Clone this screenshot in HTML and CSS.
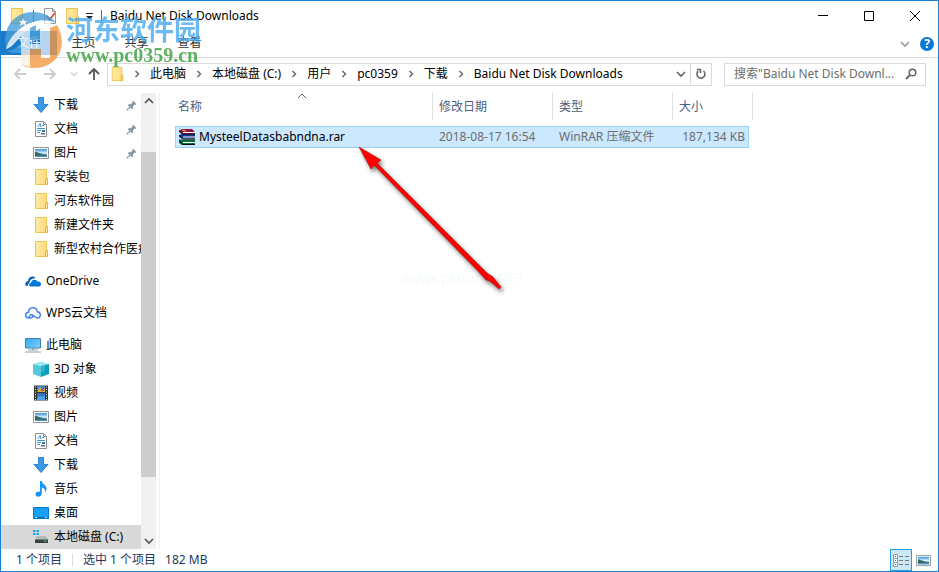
FILE: index.html
```html
<!DOCTYPE html>
<html lang="zh-CN">
<head>
<meta charset="utf-8">
<title>Baidu Net Disk Downloads</title>
<link rel="stylesheet" href="styles.css">
</head>
<body>
<svg class="defs" aria-hidden="true">
  <defs>
    <linearGradient id="gFolder" x1="0" x2="1"><stop offset="0" stop-color="#ffe9a2"/><stop offset="1" stop-color="#ffdc7c"/></linearGradient>
    <linearGradient id="gScreen" x1="0" y1="0" x2="1" y2="1"><stop offset="0" stop-color="#35a9f5"/><stop offset="1" stop-color="#7bd0ff"/></linearGradient>
    <linearGradient id="gSky" x1="0" y1="0" x2="0" y2="1"><stop offset="0" stop-color="#3a8fd9"/><stop offset=".5" stop-color="#d4eefa"/><stop offset="1" stop-color="#2d6f9c"/></linearGradient>
  </defs>
  <symbol id="folder" viewBox="0 0 16 16"><path d="M2.500.5h11v9h1v6h-12z" fill="url(#gFolder)" stroke="#ebc654"/><path d="M14.500 15.500h-2V10l1-1h1v6.500z" fill="#ffe596" stroke="#e3b93e"/></symbol>
  <symbol id="down" viewBox="0 0 16 16"><path d="M5.500.5h5v7h4.500L8 15.500 1 7.500h4.500z" fill="#3a99e8" stroke="#2d83cc"/></symbol>
  <symbol id="doc" viewBox="0 0 16 16"><path d="M2.500.5h8l3 3v12h-11z" fill="#fff" stroke="#8a8f93"/><path d="M10.500.5v3h3" fill="none" stroke="#8a8f93"/><path d="M5 6l2-3.500L8 6M4 7.500h8M4 9.500h4M4 11.500h3M9 4.500h2" fill="none" stroke="#3a97d8"/><path d="M9 9h3v2H9zM8 12h4v1.500H8z" fill="#4c7590"/></symbol>
  <symbol id="pic" viewBox="0 0 16 16"><path d="M.5 2.500h15v11H.5z" fill="#fff" stroke="#8e969c"/><path d="M2 4h12v8H2z" fill="url(#gSky)"/><path d="M2 7c3 0 5 2 12 3v1H2z" fill="#35685e"/><path d="M2 11l6-.5 6 .5v1H2z" fill="#4e91c6"/></symbol>
  <symbol id="cloud" viewBox="0 0 16 16"><path d="M1.500 13C-.5 12 0 8.500 3 8c0-4 5-6 7.500-3L7 6C5 7 4 9 4.500 10.500 3 10.500 2.500 12 3 13z" fill="#0a62b8"/><path d="M5 13.500C3.500 12.500 4 10 6 10c.3-3.500 5-4.500 6.500-1.500 2.500-.3 4 1.500 3.300 3.500-.3 1-1 1.500-2 1.500z" fill="#0078d7"/></symbol>
  <symbol id="wps" viewBox="0 0 16 16"><path d="M4 13C-.5 13 0 7.500 3.500 7.200 3.500 1.500 11.500 1 12.300 6.700c4 .3 4 6.300 0 6.300-3 0-4.500-5-7-3-2 1.500-.5 4 1.500 2.600l1.500-1.300" fill="none" stroke="#4481ed" stroke-width="1.500"/></symbol>
  <symbol id="pc" viewBox="0 0 16 16"><path d="M.5 1.500h15v9.500H.5z" fill="url(#gScreen)" stroke="#467fa5"/><path d="M7 11h2v2H7zM3 12.500h10v1H3z" fill="#91a5b0"/><path d="M0 15h16" stroke="#909da5"/></symbol>
  <symbol id="cube" viewBox="0 0 16 16"><path d="M0 3l8-2.500L16 3 8 5z" fill="#9ee8f1"/><path d="M0 3l8 2v11l-8-3z" fill="#52c9da"/><path d="M8 5l8-2v10l-8 3z" fill="#0b9dbd"/><path d="M8 5l4-1v6l-4 2z" fill="#28b6cd"/></symbol>
  <symbol id="film" viewBox="0 0 16 16"><path d="M1 .5h14v15H1z" fill="#343334"/><path d="M4 1h8v6H4z" fill="#3984d8"/><path d="M4 8h8v7H4z" fill="#316fc1"/><path d="M5 5l2-3 2 2 3-1v4H5z" fill="#d7b52e"/><path d="M8 3h3v3H8z" fill="#a14ac5"/><path d="M4 13l3-3 2 2 3-2v5H4z" fill="#4aa2e6"/><path d="M2.500 1.500v14M13.500 1.500v14" stroke="#eee" stroke-dasharray="1 1.500"/></symbol>
  <symbol id="note" viewBox="0 0 16 16"><path d="M7 0h1.800c.2 3 4.700 4 4.700 7.500 0 1.700-.7 2.800-1.600 4 .6-3.200-.9-4.500-3.100-5v6c0 2-1.700 3.200-3.500 3.200S2.500 14.800 2.500 13.300c0-2 2.500-3.300 4.500-2.600z" fill="#1697f4"/></symbol>
  <symbol id="desk" viewBox="0 0 16 16"><path d="M.5 2.500h15v11H.5z" fill="#17a0fb" stroke="#0879c6"/><path d="M1 12.500h14" stroke="#0c68ae"/><path d="M2 12.500h2M12 12.500h2" stroke="#9ddcff"/></symbol>
  <symbol id="drive" viewBox="0 0 16 16"><path d="M0 1h2.500v2H0zM3.500 1H6v2H3.500zM0 4h2.500v2H0zM3.500 4H6v2H3.500z" fill="#13a8ea"/><path d="M4 7h9l2 4H2z" fill="#b4b8ba"/><path d="M2 10.500h13v3.500H2z" fill="#3b4043"/><path d="M11 12h2.500" stroke="#42e04c"/></symbol>
  <symbol id="pin" viewBox="0 0 12 12"><path d="M7.500.5L11.500 4.500l-1 .7-1-.2-2 2 .2 2-1 1L2 5.500l1-1 2.200.2 2-2L7 1.500z" fill="#8796a1"/><path d="M4.500 7.500L.8 11.200" stroke="#8796a1" stroke-width="1.300"/></symbol>
  <symbol id="chev" viewBox="0 0 8 8"><path d="M2.500 1l3 3-3 3" fill="none" stroke="#6c6c6c" stroke-width="1.500"/></symbol>
  <symbol id="chevdown" viewBox="0 0 10 10"><path d="M1 3l4 4 4-4" fill="none" stroke="currentColor" stroke-width="1.600"/></symbol>
  <symbol id="arrow" viewBox="0 0 14 14"><path d="M13 7H2M7 2L2 7l5 5" fill="none" stroke="currentColor" stroke-width="1.800"/></symbol>
</svg>

<div class="window">
  <header class="titlebar">
    <svg class="icon"><use href="#folder"/></svg>
    <i class="tsep"></i>
    <svg class="icon" viewBox="0 0 16 16"><path d="M2.500.5h8l3 3v12h-11z" fill="#fafafa" stroke="#999"/><path d="M10.500.5v3h3" fill="none" stroke="#999"/><path d="M4.500 8l3 3.500L13 5" fill="none" stroke="#d5512f" stroke-width="1.800"/></svg>
    <svg class="icon"><use href="#folder"/></svg>
    <svg class="quick" viewBox="0 0 8 8"><path d="M1 1.500h7" stroke="#222"/><path d="M1 4h7L4.500 7.500z" fill="#222"/></svg>
    <i class="tsep"></i>
    <h1>Baidu Net Disk Downloads</h1>
    <div class="controls">
      <button aria-label="最小化"><svg viewBox="0 0 12 12"><path d="M1 5.500h10" stroke="#000"/></svg></button>
      <button aria-label="最大化"><svg viewBox="0 0 12 12"><path d="M1.500 1.500h9v9h-9z" fill="none" stroke="#000"/></svg></button>
      <button aria-label="关闭"><svg viewBox="0 0 12 12"><path d="M1 1l10 10M11 1L1 11" stroke="#000"/></svg></button>
    </div>
  </header>

  <nav class="ribbon">
    <button class="tab file">文件</button>
    <button class="tab">主页</button>
    <button class="tab">共享</button>
    <button class="tab">查看</button>
    <div class="ribbon-end">
      <button class="expand" aria-label="展开功能区"><svg class="small"><use href="#chevdown"/></svg></button>
      <button class="help" aria-label="帮助">?</button>
    </div>
  </nav>

  <div class="location">
    <div class="history">
      <button aria-label="后退" class="off"><svg><use href="#arrow"/></svg></button>
      <button aria-label="前进" class="off fwd"><svg><use href="#arrow"/></svg></button>
      <button aria-label="最近" class="off recent"><svg><use href="#chevdown"/></svg></button>
      <button aria-label="向上" class="up"><svg><use href="#arrow"/></svg></button>
    </div>
    <div class="address">
      <svg class="icon"><use href="#folder"/></svg>
      <svg class="chev"><use href="#chev"/></svg><a href="#">此电脑</a>
      <svg class="chev"><use href="#chev"/></svg><a href="#">本地磁盘 (C:)</a>
      <svg class="chev"><use href="#chev"/></svg><a href="#">用户</a>
      <svg class="chev"><use href="#chev"/></svg><a href="#">pc0359</a>
      <svg class="chev"><use href="#chev"/></svg><a href="#">下载</a>
      <svg class="chev"><use href="#chev"/></svg><a href="#">Baidu Net Disk Downloads</a>
      <button class="drop" aria-label="历史记录"><svg class="small"><use href="#chevdown"/></svg></button>
      <button class="refresh" aria-label="刷新"><svg viewBox="0 0 12 12"><path d="M8.500 3A4 4 0 1 1 3.200 3.200M2 1.500h3.500V5" fill="none" stroke="#666" stroke-width="1.600"/></svg></button>
    </div>
    <form class="search">
      <input type="text" aria-label="搜索" placeholder="搜索&quot;Baidu Net Disk Downl...">
      <svg viewBox="0 0 12 12"><circle cx="7.500" cy="4.500" r="3.300" fill="none" stroke="#666" stroke-width="1.500"/><path d="M5 7L1 11" stroke="#666" stroke-width="2"/></svg>
    </form>
  </div>

  <div class="body">
    <nav class="tree">
      <ul>
        <li><svg class="icon"><use href="#down"/></svg>下载<svg class="pin"><use href="#pin"/></svg></li>
        <li><svg class="icon"><use href="#doc"/></svg>文档<svg class="pin"><use href="#pin"/></svg></li>
        <li><svg class="icon"><use href="#pic"/></svg>图片<svg class="pin"><use href="#pin"/></svg></li>
        <li><svg class="icon"><use href="#folder"/></svg>安装包</li>
        <li><svg class="icon"><use href="#folder"/></svg>河东软件园</li>
        <li><svg class="icon"><use href="#folder"/></svg>新建文件夹</li>
        <li><svg class="icon"><use href="#folder"/></svg>新型农村合作医疗</li>
        <li class="root"><svg class="icon"><use href="#cloud"/></svg>OneDrive</li>
        <li class="root"><svg class="icon"><use href="#wps"/></svg>WPS云文档</li>
        <li class="root"><svg class="icon"><use href="#pc"/></svg>此电脑</li>
        <li><svg class="icon"><use href="#cube"/></svg>3D 对象</li>
        <li><svg class="icon"><use href="#film"/></svg>视频</li>
        <li><svg class="icon"><use href="#pic"/></svg>图片</li>
        <li><svg class="icon"><use href="#doc"/></svg>文档</li>
        <li><svg class="icon"><use href="#down"/></svg>下载</li>
        <li><svg class="icon"><use href="#note"/></svg>音乐</li>
        <li><svg class="icon"><use href="#desk"/></svg>桌面</li>
        <li class="current"><svg class="icon"><use href="#drive"/></svg>本地磁盘 (C:)</li>
      </ul>
    </nav>
    <div class="scrollbar">
      <button class="flip" aria-label="向上滚动"><svg class="small"><use href="#chevdown"/></svg></button>
      <div class="track"><div class="thumb"></div></div>
      <button aria-label="向下滚动"><svg class="small"><use href="#chevdown"/></svg></button>
    </div>
    <main>
      <table>
        <thead>
          <tr><th>名称<svg class="sort" viewBox="0 0 10 6"><path d="M1 5l4-4 4 4" fill="none" stroke="#666"/></svg></th><th>修改日期</th><th>类型</th><th>大小</th></tr>
        </thead>
        <tbody>
          <tr>
            <td class="name"><svg class="icon" viewBox="0 0 16 16"><path d="M0 1.500L3 0h10l3 3v2H3L0 3z" fill="#8b1548"/><path d="M0 6l3-1h13v4.500H3L0 8z" fill="#16338d"/><path d="M0 10.500h16V16H3l-3-2z" fill="#0d6a3c"/><path d="M4 3.500h12M4 8h12M4 13.500h12" stroke="#fff" stroke-width="1.200"/><path d="M0 1.500L3.500 5H16M0 6l3.500 4H16M0 11l3.500 4.500H16" fill="none" stroke="#111"/><path d="M3 1l4 1" stroke="#e1b52d"/></svg>MysteelDatasbabndna.rar</td>
            <td>2018-08-17 16:54</td><td>WinRAR 压缩文件</td><td class="size">187,134 KB</td>
          </tr>
        </tbody>
      </table>
      <span class="faint">www.pHome.NET</span>
      <svg class="pointer" viewBox="0 0 160 160"><path d="M4 4l22 13-4 3L132 130l6 4 8 10-2 2-9-8-4-1-9-10L19 22l-3 4z" fill="#f00" stroke="#a31212" stroke-width=".6"/></svg>
    </main>
  </div>

  <footer class="status">
    <span>1 个项目</span><i></i><span>选中 1 个项目</span><span>182 MB</span>
    <div class="views">
      <button class="on" aria-label="详细信息"><svg viewBox="0 0 18 14"><path d="M1.500 1.500h4v4h-4zM1.500 5.500h4v4h-4zM1.500 9.500h4v4h-4z" fill="#fff" stroke="#999"/><path d="M3 3.500h1" stroke="#444"/><path d="M3 7.500h1" stroke="#2877d8"/><path d="M3 11.500h1" stroke="#d22"/><path d="M7 3.500h4M13 3.500h4M7 7.500h4M13 7.500h4M7 11.500h4M13 11.500h4" stroke="#777"/></svg></button>
      <button aria-label="大图标"><svg class="icon"><use href="#pic"/></svg></button>
    </div>
  </footer>
</div>

<div class="watermark">
  <svg viewBox="0 0 60 60">
    <path d="M2 38C-2 18 11 3 29 3c11 0 19 5 23 11C42 9 29 11 20 19 12 26 5 36 2 38z" fill="#489ed8"/>
    <path d="M3 42C9 42 14 38 18 33V22l14-8v8l6-4v13H26v13H12c-4 0-7-1-9-2z" fill="#4a9fdc"/>
    <path d="M46 19l7-3c11 18 3 43-23 43-5 0-9-1-13-3V46l10-6h10v9h9z" fill="#f39a45"/>
    <path d="M2 40C5 28 18 13 36 12c6 0 11 2 13 4-5-2-11-2-16 0C18 20 12 38 2 40z" fill="#fff"/>
    <path d="M17 56V24l9-5v16h10V17l10-5v37h-9v-9H26v18z" fill="#fff" opacity=".85"/>
    <path d="M19 9l1 3h3l-2 2 1 3-3-2-3 2 1-3-2-2h3z" fill="#fff"/>
  </svg>
  <div><b>河东软件园</b><span>www.pc0359.cn</span></div>
</div>
</body>
</html>
```
FILE: styles.css
```css
* { box-sizing: border-box; }
body {
  margin: 0;
  font: 12px/16px "Noto Sans", "Noto Sans CJK SC", sans-serif;
  color: #000;
  background: #fff;
  position: relative;
}
button, input { font: inherit; color: inherit; border: 0; padding: 0; background: none; }
a { color: inherit; text-decoration: none; }
svg { display: block; flex: none; }
.defs { position: absolute; width: 0; height: 0; }
.icon { width: 16px; height: 16px; }
.small { width: 10px; height: 10px; }

.window {
  display: flex;
  flex-direction: column;
  min-height: 100vh;
  border: 1px solid #1b80d3;
}

.titlebar { display: flex; align-items: center; height: 30px; padding-left: 8px; }
.tsep { width: 1px; height: 12px; margin: 0 8px; background: #666; }
.titlebar .icon + .icon { margin-left: 6px; }
.quick { width: 8px; height: 8px; margin-left: 5px; }
.titlebar h1 { margin: 0; font-size: 12px; font-weight: 400; }
.controls { display: flex; margin-left: auto; height: 100%; }
.controls button { display: grid; place-items: center; width: 46px; }
.controls svg { width: 12px; height: 12px; }

.ribbon { display: flex; height: 27px; border-bottom: 1px solid #dadbdc; }
.tab { width: 53px; height: 24px; color: #333; }
.tab.file { width: 56px; background: #1979ca; color: #fff; }
.ribbon-end { display: flex; align-items: center; gap: 10px; margin-left: auto; padding-right: 4px; }
.expand { color: #999; }
.help { width: 14px; height: 14px; border-radius: 50%; background: #0a78d6; color: #fff; font-weight: 700; line-height: 14px; }

.location { display: flex; align-items: center; height: 35px; padding: 0 12px 3px 12px; }
.history { display: flex; align-items: center; width: 94px; color: #555; }
.history svg { width: 14px; height: 14px; }
.history .off { color: #ccc; }
.history .fwd { margin-left: 16px; transform: scaleX(-1); }
.history .recent { margin-left: 13px; }
.history .recent svg { width: 8px; height: 8px; }
.history .up { margin-left: 9px; transform: rotate(90deg); }
.address { display: flex; align-items: center; flex: 1; height: 23px; border: 1px solid #d9d9d9; padding-left: 2px; white-space: nowrap; }
.address .icon { width: 14px; }
.chev { width: 8px; height: 8px; margin: 0 9px; }
.drop { margin-left: auto; margin-right: 4px; color: #666; }
.refresh { display: grid; place-items: center; width: 21px; height: 100%; border-left: 1px solid #d9d9d9; }
.refresh svg { width: 12px; height: 12px; }
.search { display: flex; align-items: center; width: 202px; height: 23px; margin-left: 12px; padding: 0 8px 0 9px; border: 1px solid #d9d9d9; }
.search input { flex: 1; min-width: 0; outline: 0; }
.search input::placeholder { color: #6d6d6d; opacity: 1; }
.search svg { width: 12px; height: 12px; }

.body { display: flex; flex: 1; }
.tree { width: 140px; overflow: hidden; }
.tree ul { list-style: none; margin: 0; padding: 0; }
.tree li { display: flex; align-items: center; gap: 5px; height: 24px; padding-left: 32px; white-space: nowrap; position: relative; }
.tree .root { margin-top: 8px; padding-left: 24px; }
.tree .current { background: #d9d9d9; }
.pin { position: absolute; right: 4px; width: 11px; height: 11px; }
.scrollbar { display: flex; flex-direction: column; width: 15px; background: #f0f0f0; color: #505050; }
.scrollbar button { display: grid; place-items: center; height: 17px; }
.scrollbar .flip { transform: scaleY(-1); }
.track { flex: 1; display: grid; grid-template-rows: 10% 77% 1fr; }
.thumb { grid-row: 2; background: #cdcdcd; }

main { flex: 1; position: relative; margin-left: 3px; padding-left: 15px; border-left: 1px solid #f0f0f0; }
table { display: block; width: 578px; }
thead, tbody { display: block; }
tr { display: grid; grid-template-columns: 258px 120px 120px 80px; }
th { position: relative; height: 27px; padding: 0 0 0 6px; border-right: 1px solid #e0e0e0; font-weight: 400; text-align: left; line-height: 27px; color: #4c607a; }
th:first-child { padding-left: 3px; }
.sort { position: absolute; left: 122px; top: 0; width: 10px; height: 6px; }
tbody tr { width: 574px; margin-top: 6px; grid-template-columns: 257px 120px 120px 75px; border: 1px solid #99d1ff; background: #cce8ff; }
td { height: 20px; padding: 0 0 0 6px; line-height: 20px; color: #6d6d6d; white-space: nowrap; }
td.name { display: flex; align-items: center; gap: 4px; padding-left: 3px; color: #000; }
td.size { padding: 0 3px 0 0; text-align: right; }
.faint { position: absolute; left: 242px; top: 176px; color: #f5fbfc; font-size: 15px; }
.pointer { position: absolute; left: 195px; top: 50px; width: 160px; height: 160px; filter: drop-shadow(2px 3px 2px #0008); }

.status { display: flex; align-items: center; height: 22px; padding-left: 15px; color: #1e395b; }
.status i { width: 1px; height: 12px; margin: 0 10px; background: #dcdcdc; }
.status span + span { margin-left: 9px; }
.views { display: flex; height: 100%; margin-left: auto; padding-right: 4px; }
.views button { display: grid; place-items: center; width: 22px; }
.views .on { border: 1px solid #26a0da; background: #cbe8f6; }
.views .on svg { width: 18px; height: 14px; }
.views .icon { width: 15px; height: 15px; }

.watermark { position: absolute; left: 4px; top: 9px; display: flex; gap: 2px; pointer-events: none; opacity: .8; }
.watermark svg { width: 60px; height: 60px; }
.watermark div { display: flex; flex-direction: column; padding-top: 5px; }
.watermark b { font: 700 27px/29px "Noto Sans CJK SC", sans-serif; color: #48aaf0; }
.watermark span { font: 700 20px/24px "Liberation Serif", serif; color: #38a03a; }
```
